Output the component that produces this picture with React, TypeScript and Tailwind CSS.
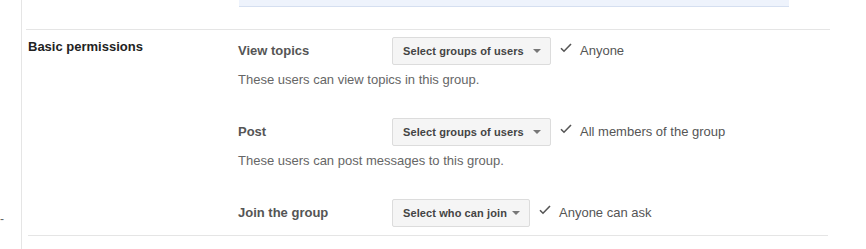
import React from "react";

type Row = {
  label: string;
  button: string;
  buttonW: string;
  value: string;
  desc?: string;
};

const rows: Row[] = [
  {
    label: "View topics",
    button: "Select groups of users",
    buttonW: "w-[159px]",
    value: "Anyone",
    desc: "These users can view topics in this group.",
  },
  {
    label: "Post",
    button: "Select groups of users",
    buttonW: "w-[159px]",
    value: "All members of the group",
    desc: "These users can post messages to this group.",
  },
  {
    label: "Join the group",
    button: "Select who can join",
    buttonW: "w-[138px]",
    value: "Anyone can ask",
  },
];

function Check() {
  return (
    <svg width="12" height="10" viewBox="0 0 12 10" className="shrink-0">
      <path d="M1 5.2 L4 8.2 L11 1" fill="none" stroke="#555" strokeWidth="1.6" />
    </svg>
  );
}

function Caret() {
  return (
    <svg width="8" height="4" viewBox="0 0 8 4" className="shrink-0">
      <path d="M0 0 L8 0 L4 4 Z" fill="#777" />
    </svg>
  );
}

export default function App() {
  return (
    <main
      className="w-[866px] h-[249px] bg-white flex overflow-hidden"
      style={{ fontFamily: '"Liberation Sans", Arial, sans-serif' }}
    >
      <div className="w-[21px] shrink-0 pt-[206px]">
        <span className="text-[12px] leading-[14px] text-[#666]">-</span>
      </div>

      <div className="flex-1 border-l border-[#e5e5e5] flex flex-col">
        <div className="pl-[217px]">
          <div className="w-[550px] h-[7px] bg-[#eef3fc] border-b border-[#d5dff0]" />
        </div>

        <div className="mt-[22px] ml-[4px] w-[804px] border-t border-[#e5e5e5]" />

        <div className="flex ml-[6px] pt-[7px]">
          <div className="w-[210px] shrink-0 pt-[2px] text-[13px] leading-[16px] font-bold text-[#222]">
            Basic permissions
          </div>

          <div className="flex flex-col">
            {rows.map((r, i) => (
              <div key={i} className={i < rows.length - 1 ? "mb-[29px]" : ""}>
                <div className="flex items-center h-[28px]">
                  <div className="w-[154px] shrink-0 text-[13px] font-bold text-[#555]">
                    {r.label}
                  </div>
                  <div
                    className={`${r.buttonW} h-[28px] shrink-0 flex items-center justify-between pl-[10px] pr-[9px] bg-[#f5f5f5] border border-[#dcdcdc] rounded-[2px] text-[11px] tracking-[0.1px] font-bold text-[#444]`}
                  >
                    <span>{r.button}</span>
                    <Caret />
                  </div>
                  <div className="flex items-center ml-[9px] gap-[8px]">
                    <div className="-mt-[6px]">
                      <Check />
                    </div>
                    <span className="text-[13px] text-[#555]">{r.value}</span>
                  </div>
                </div>
                {r.desc && (
                  <div className="mt-[6px] text-[13px] leading-[18px] text-[#666]">
                    {r.desc}
                  </div>
                )}
              </div>
            ))}
          </div>
        </div>

        <div className="mt-[8px] ml-[6px] w-[800px] border-t border-[#e5e5e5]" />
      </div>
    </main>
  );
}
